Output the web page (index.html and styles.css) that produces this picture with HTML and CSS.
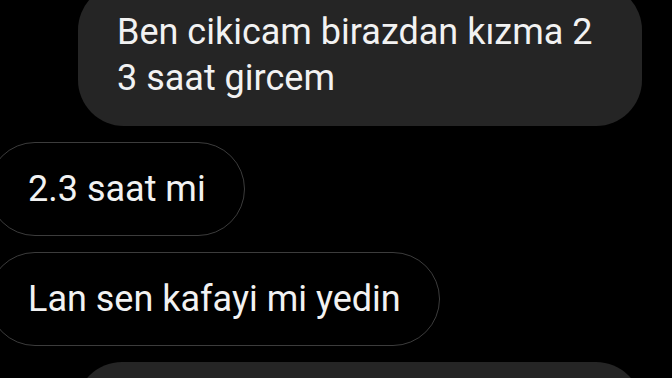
FILE: index.html
```html
<!DOCTYPE html>
<html lang="tr">
<head>
    <meta charset="UTF-8">
    <meta name="viewport" content="width=device-width, initial-scale=1.0">
    <title>Mesajlar</title>
    <link rel="stylesheet" href="styles.css">
</head>
<body>
    <div class="chat">
        <div class="bubble sent first">
            Ben cikicam birazdan kızma 2<br>
            3 saat gircem
        </div>

        <div class="bubble received">2.3 saat mi</div>

        <div class="bubble received">Lan sen kafayi mi yedin</div>

        <div class="bubble sent next"></div>
    </div>
</body>
</html>
```

FILE: styles.css
```css
body {
    margin: 0;
    background-color: #000;
    font-family: Roboto, 'Liberation Sans', sans-serif;
    color: #f2f2f2;
}
.chat {
    display: flex;
    flex-direction: column;
    align-items: flex-start;
    gap: 16px;
    height: 378px;
    overflow: hidden;
}
.bubble {
    font-size: 36px;
    line-height: 46px;
    white-space: nowrap;
    box-sizing: border-box;
    flex-shrink: 0;
}
.sent {
    background-color: #252525;
    border-radius: 46px;
    margin-left: 78px;
    width: 564px;
    padding: 25px 40px 25px 39px;
}
.first {
    margin-top: -16px;
}
.received {
    border: 1.5px solid #3c3c3c;
    border-radius: 48px;
    margin-left: -12px;
    padding: 23px 38px 23px 39px;
}
.next {
    margin-left: 76px;
    width: 566px;
    height: 120px;
}
```
